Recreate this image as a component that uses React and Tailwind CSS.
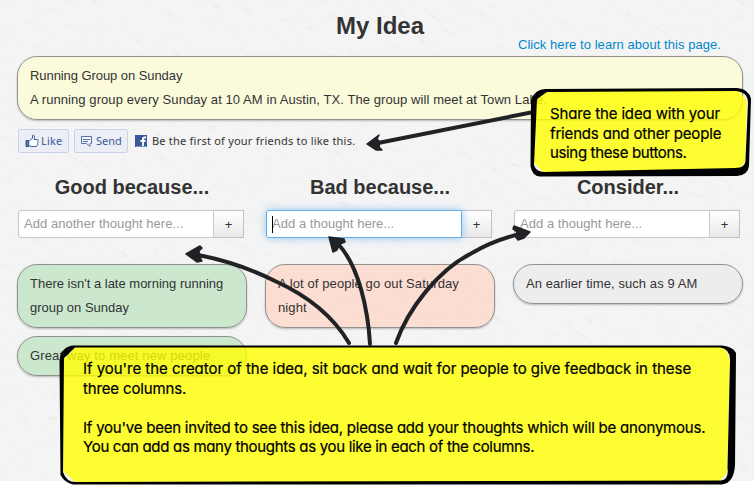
import React from "react";

const body = "font-['Liberation_Sans',Arial,sans-serif]";
const hand = "font-['Inter',sans-serif] [font-feature-settings:'cv11'] [-webkit-text-stroke:0.2px_black]";

function Texture() {
  return (
    <svg className="absolute left-0 top-0" width="754" height="481" aria-hidden="true">
      <defs>
        <filter id="plaster" x="0" y="0" width="100%" height="100%" colorInterpolationFilters="sRGB">
          <feTurbulence type="fractalNoise" baseFrequency="0.06 0.1" numOctaves="4" seed="8" result="n" />
          <feDiffuseLighting in="n" surfaceScale="1.3" diffuseConstant="1.24" lightingColor="#fbfbfb">
            <feDistantLight azimuth="250" elevation="60" />
          </feDiffuseLighting>
        </filter>
      </defs>
      <rect width="754" height="481" fill="#f3f3f3" />
      <rect x="-300" y="-500" width="1400" height="1500" filter="url(#plaster)" opacity="0.16" transform="rotate(38 377 240)" />
    </svg>
  );
}

function Note({ className, children }) {
  return (
    <div className={`rounded-[20px] border border-[#8f918f] px-3 py-[7px] leading-6 shadow-[0_1px_2px_rgba(0,0,0,0.25)] ${className}`}>
      {children}
    </div>
  );
}

function Column({ title, placeholder, focused, children }) {
  return (
    <section className="w-[230px] shrink-0">
      <h2 className="h-[35px] whitespace-nowrap text-center text-[20px] font-bold leading-6 text-[#333]">{title}</h2>
      <div className="ml-px flex h-7">
        <div
          className={`relative flex w-[196px] items-center rounded-l-[3px] border bg-white pl-[5px] text-[#999] ${
            focused ? "z-10 border-[#62aee4] shadow-[0_0_8px_rgba(82,168,236,0.6)]" : "border-[#c8c8c8]"
          }`}
        >
          {focused && <span className="absolute left-[5px] top-[5px] h-[17px] w-px bg-black" />}
          <span className="whitespace-nowrap tracking-[0.04px]">{placeholder}</span>
        </div>
        <button className="w-[30px] border border-l-0 border-[#c0c0c0] bg-gradient-to-b from-white to-[#e8e8e8] text-center leading-none text-[#333]">+</button>
      </div>
      <div className="mt-[26px] flex flex-col gap-2">{children}</div>
    </section>
  );
}

function Overlay() {
  return (
    <svg className="absolute left-0 top-0 z-20" width="754" height="485" viewBox="0 0 754 485" aria-hidden="true">
      <g fill="none" stroke="#202225" strokeWidth="4" strokeLinecap="round">
        <path d="M531 112.500L378 143" />
        <path d="M349 343C333 316 306 295 275 281C249 268 225 260 198 255" />
        <path d="M370 344C368 310 359 267 339 245" />
        <path d="M396 343C408 309 438 270 472 253C489 243 503 238 520 234" />
      </g>
      <g fill="#202225" stroke="#202225" strokeWidth="1.500" strokeLinejoin="round">
        <path d="M367 144L379 135L377 139L380 142L379 147L382 150L376 150Z" />
        <path d="M186 254L200 246L202 248L199 251L200 257L202 261L197 262Z" />
        <path d="M329 237L344 239L345 242L340 244L337 250L333 252Z" />
        <path d="M530 232L514 226L513 229L517 232L515 236L518 240L524 238Z" />
      </g>
      <path d="M544 91L738 90L747 101L745 162L738 170L544 173L534 163L536 101Z" fill="#ffff00" fillOpacity="0.8" />
      <path
        fillRule="evenodd"
        d="M545 89L737 88Q749 89 751 99L749 166Q748 175 737 176L540 176.500Q532 176 530.500 166L531 100Q534 90 545 89ZM547 92L537 99L534 165Q536 172 544 172L735 168Q746 168 745.500 159L748 103Q748 92 736 91Z"
        fill="#000"
      />
      <path d="M76 347L720 347L726 350L730 360L727 473L720 481L76 483L62 470L63 360Z" fill="#ffff00" fillOpacity="0.8" />
      <path
        fillRule="evenodd"
        d="M73 345.500L722 345.500Q734 347 736 353L735 465Q734 483 722 484.500L73 484.500Q65 483 60.500 475L59.500 360Q61 347 73 345.500ZM75 347.500L64 358L63 472Q66 482 76 482L721 480.500Q729 480 727.500 468L730 362Q731 349 720 347.500Z"
        fill="#000"
      />
    </svg>
  );
}

export default function App() {
  return (
    <div className={`relative h-[485px] w-[754px] overflow-hidden bg-white text-[13px] text-[#333] ${body}`}>
      <Texture />
      <main className="relative pl-[17px] pr-[11px]">
        <header className="relative h-[56px] pt-3">
          <h1 className="text-center text-[24px] font-bold leading-[28px]">My Idea</h1>
          <a className="absolute right-[22px] top-[36px] whitespace-nowrap leading-[18px] tracking-[0.06px] text-[#0088cc]">Click here to learn about this page.</a>
        </header>

        <Note className="h-16 whitespace-nowrap bg-[#ffffcc]/60">
          <p className="tracking-[-0.07px]">Running Group on Sunday</p>
          <p className="tracking-[0.08px]">A running group every Sunday at 10 AM in Austin, TX. The group will meet at Town Lake.</p>
        </Note>

        <div className="mt-[9px] flex h-6 items-center font-['Noto_Sans',sans-serif] text-[11px]">
          <button className="ml-px flex h-6 w-[51px] items-center gap-px rounded-[2px] border border-[#cad4e7] bg-[#eceef5] pl-[6px] text-[#3b5998]">
            <svg width="15" height="15" viewBox="0 0 15 15" fill="none" stroke="#3b5998">
              <path d="M1 6.500h3v6H1z" fill="#5670a8" />
              <path d="M4.500 7L7.500 4V1.500Q8 .5 9 1.500Q10 3 9 5.500H12.500Q13.700 6.500 12.700 7.500Q13.700 8.500 12.500 9.500Q13 10.500 12 11.500Q12 12.500 10.500 12.500H6L4.500 11.500" fill="#fff" />
            </svg>
            <span className="tracking-[0.2px]">Like</span>
          </button>
          <button className="ml-[5px] flex h-6 w-[54px] items-center gap-[3px] rounded-[2px] border border-[#cad4e7] bg-[#eceef5] pl-[5px] text-[#3b5998]">
            <svg width="13" height="13" viewBox="0 0 13 13" fill="none" stroke="#5670a8">
              <path d="M1.500 1.500H11.500V8.500H10V11.500L6.500 8.500H1.500Z" fill="#f7f8fc" />
              <path d="M3 4.500H10M3 6.500H8" />
            </svg>
            <span>Send</span>
          </button>
          <svg className="ml-[7px]" width="12" height="12" viewBox="0 0 12 12">
            <rect width="12" height="12" fill="#3b5998" />
            <path d="M11 2.500H9.500Q8 2.500 8 4V12M5.500 6H10.500" stroke="#fff" strokeWidth="1.800" fill="none" />
            <path d="M1 11.500H11" stroke="#8195c0" />
          </svg>
          <span className="ml-[5px] whitespace-nowrap tracking-[0.22px]">Be the first of your friends to like this.</span>
        </div>

        <div className="mt-[22px] flex gap-[18px]">
          <Column title="Good because..." placeholder="Add another thought here...">
            <Note className="h-16 bg-[#b9e2bd]/70">There isn't a late morning running group on Sunday</Note>
            <Note className="h-10 whitespace-nowrap bg-[#b9e2bd]/70 tracking-[0.14px]">Great way to meet new people</Note>
          </Column>
          <Column title="Bad because..." placeholder="Add a thought here..." focused>
            <Note className="h-16 bg-[#ffd3c2]/70 tracking-[0.1px]">A lot of people go out Saturday night</Note>
          </Column>
          <Column title="Consider..." placeholder="Add a thought here...">
            <Note className="h-10 bg-[#ebebeb]/80 tracking-[0.08px]">An earlier time, such as 9 AM</Note>
          </Column>
        </div>
      </main>

      <Overlay />
      <div className={`absolute left-[550px] top-[104px] z-30 whitespace-nowrap text-[15px] leading-[19.500px] text-black ${hand}`}>
        <p className="tracking-[-0.14px]">Share the idea with your</p>
        <p className="tracking-[-0.17px]">friends and other people</p>
        <p className="tracking-[-0.35px]">using these buttons.</p>
      </div>
      <div className={`absolute left-[83px] top-[359px] z-30 whitespace-nowrap text-[15px] leading-[19.500px] text-black ${hand}`}>
        <p className="tracking-[-0.03px]">If you're the creator of the idea, sit back and wait for people to give feedback in these</p>
        <p className="tracking-[-0.14px]">three columns.</p>
        <p>&nbsp;</p>
        <p className="tracking-[-0.22px]">If you've been invited to see this idea, please add your thoughts which will be anonymous.</p>
        <p className="tracking-[-0.31px]">You can add as many thoughts as you like in each of the columns.</p>
      </div>
    </div>
  );
}
